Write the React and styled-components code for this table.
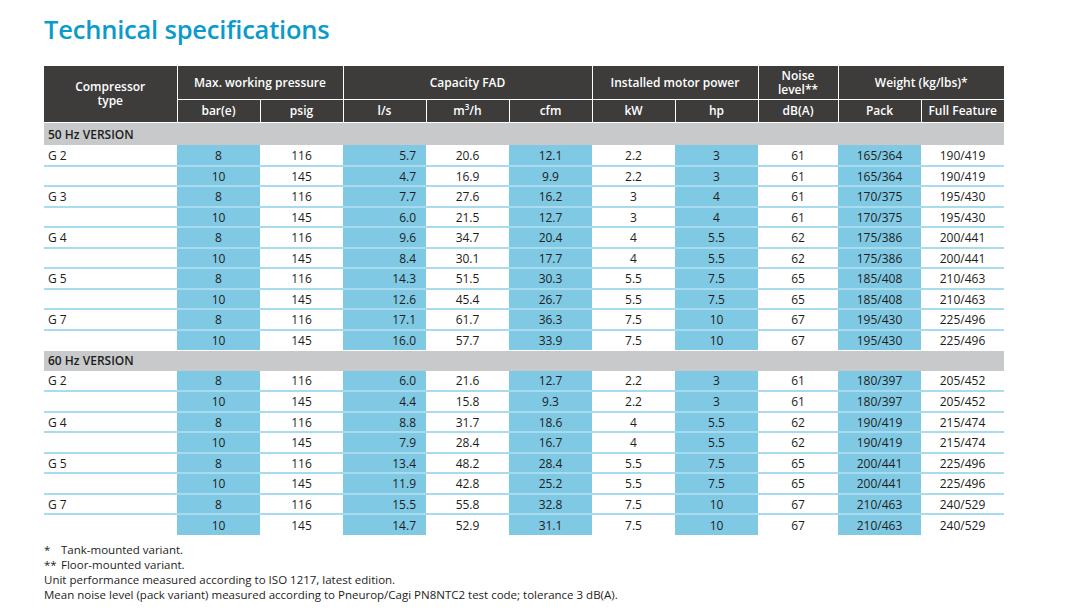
import React from "react";
import styled, { createGlobalStyle } from "styled-components";

const GlobalStyle = createGlobalStyle`
  html, body {
    margin: 0;
    padding: 0;
    background: #fff;
  }
  body {
    font-family: "Open Sans", "Liberation Sans", sans-serif;
    color: #1d1d1b;
  }
`;

const Page = styled.div`
  width: 1071px;
  height: 612px;
  padding: 12px 0 0 44px;
  box-sizing: border-box;
  overflow: hidden;
`;

const Title = styled.h1`
  margin: 0 0 20px 0;
  font-size: 25.5px;
  line-height: 34px;
  font-weight: 600;
  color: #0b9bcb;
  letter-spacing: -0.2px;
`;

const Table = styled.table`
  border-collapse: collapse;
  table-layout: fixed;
  width: 960px;
  font-size: 12px;
`;

const HeadCell = styled.th`
  background: #3d3c3b;
  color: #fff;
  font-weight: 600;
  font-size: 12px;
  line-height: 14px;
  border: 1.5px solid #fff;
  border-top: none;
  padding: 0 2px;
  height: ${(p) => (p.$top ? "33px" : "22px")};
  text-align: center;
  &:first-child {
    border-left: none;
  }
  &:last-child {
    border-right: none;
  }
`;

const SectionRow = styled.tr`
  background: #c8c9cb;
`;

const SectionCell = styled.td`
  height: ${(p) => p.$h || 20}px;
  padding: 0 4px;
  font-weight: 600;
  font-size: 12px;
  border-top: 1.5px solid #fff;
`;

const DataRow = styled.tr`
  height: 20.5px;
  border-top: ${(p) => (p.$first ? "none" : "2px solid #a9dbef")};
`;

const Cell = styled.td`
  padding: 1px ${(p) => (p.$right ? "10px" : "2px")} 0 ${(p) => (p.$left ? "4px" : "2px")};
  text-align: ${(p) => (p.$left ? "left" : p.$right ? "right" : "center")};
  background: ${(p) => (p.$blue ? "#80c9e4" : "#fff")};
  line-height: 17px;
  white-space: nowrap;
`;

const Notes = styled.div`
  margin-top: 7px;
  font-size: 11.5px;
  line-height: 15px;
  color: #1d1d1b;
`;

const NoteRow = styled.div`
  display: flex;
`;

const Mark = styled.span`
  width: 17px;
  flex: none;
`;

const blueCols = [1, 3, 5, 7, 9];

const data50 = [
  ["G 2", "8", "116", "5.7", "20.6", "12.1", "2.2", "3", "61", "165/364", "190/419"],
  ["", "10", "145", "4.7", "16.9", "9.9", "2.2", "3", "61", "165/364", "190/419"],
  ["G 3", "8", "116", "7.7", "27.6", "16.2", "3", "4", "61", "170/375", "195/430"],
  ["", "10", "145", "6.0", "21.5", "12.7", "3", "4", "61", "170/375", "195/430"],
  ["G 4", "8", "116", "9.6", "34.7", "20.4", "4", "5.5", "62", "175/386", "200/441"],
  ["", "10", "145", "8.4", "30.1", "17.7", "4", "5.5", "62", "175/386", "200/441"],
  ["G 5", "8", "116", "14.3", "51.5", "30.3", "5.5", "7.5", "65", "185/408", "210/463"],
  ["", "10", "145", "12.6", "45.4", "26.7", "5.5", "7.5", "65", "185/408", "210/463"],
  ["G 7", "8", "116", "17.1", "61.7", "36.3", "7.5", "10", "67", "195/430", "225/496"],
  ["", "10", "145", "16.0", "57.7", "33.9", "7.5", "10", "67", "195/430", "225/496"],
];

const data60 = [
  ["G 2", "8", "116", "6.0", "21.6", "12.7", "2.2", "3", "61", "180/397", "205/452"],
  ["", "10", "145", "4.4", "15.8", "9.3", "2.2", "3", "61", "180/397", "205/452"],
  ["G 4", "8", "116", "8.8", "31.7", "18.6", "4", "5.5", "62", "190/419", "215/474"],
  ["", "10", "145", "7.9", "28.4", "16.7", "4", "5.5", "62", "190/419", "215/474"],
  ["G 5", "8", "116", "13.4", "48.2", "28.4", "5.5", "7.5", "65", "200/441", "225/496"],
  ["", "10", "145", "11.9", "42.8", "25.2", "5.5", "7.5", "65", "200/441", "225/496"],
  ["G 7", "8", "116", "15.5", "55.8", "32.8", "7.5", "10", "67", "210/463", "240/529"],
  ["", "10", "145", "14.7", "52.9", "31.1", "7.5", "10", "67", "210/463", "240/529"],
];

function Rows({ rows }) {
  return rows.map((row, i) => (
    <DataRow key={i} $first={i === 0}>
      {row.map((v, j) => (
        <Cell key={j} $blue={blueCols.includes(j)} $left={j === 0} $right={j === 3}>
          {v}
        </Cell>
      ))}
    </DataRow>
  ));
}

export default function App() {
  return (
    <Page>
      <GlobalStyle />
      <Title>Technical specifications</Title>
      <Table>
        <colgroup>
          <col style={{ width: 133 }} />
          <col style={{ width: 83 }} />
          <col style={{ width: 83 }} />
          <col style={{ width: 83 }} />
          <col style={{ width: 83 }} />
          <col style={{ width: 83 }} />
          <col style={{ width: 83 }} />
          <col style={{ width: 83 }} />
          <col style={{ width: 80 }} />
          <col style={{ width: 83 }} />
          <col style={{ width: 83 }} />
        </colgroup>
        <thead>
          <tr>
            <HeadCell $top rowSpan={2}>
              Compressor
              <br />
              type
            </HeadCell>
            <HeadCell $top colSpan={2}>Max. working pressure</HeadCell>
            <HeadCell $top colSpan={3}>Capacity FAD</HeadCell>
            <HeadCell $top colSpan={2}>Installed motor power</HeadCell>
            <HeadCell $top>
              Noise
              <br />
              level**
            </HeadCell>
            <HeadCell $top colSpan={2}>Weight (kg/lbs)*</HeadCell>
          </tr>
          <tr>
            <HeadCell>bar(e)</HeadCell>
            <HeadCell>psig</HeadCell>
            <HeadCell>l/s</HeadCell>
            <HeadCell>
              m<sup style={{ fontSize: 8, lineHeight: 0 }}>3</sup>/h
            </HeadCell>
            <HeadCell>cfm</HeadCell>
            <HeadCell>kW</HeadCell>
            <HeadCell>hp</HeadCell>
            <HeadCell>dB(A)</HeadCell>
            <HeadCell>Pack</HeadCell>
            <HeadCell>Full Feature</HeadCell>
          </tr>
        </thead>
        <tbody>
          <SectionRow>
            <SectionCell colSpan={11} $h={22}>50 Hz VERSION</SectionCell>
          </SectionRow>
          <Rows rows={data50} />
          <SectionRow>
            <SectionCell colSpan={11} $h={20}>60 Hz VERSION</SectionCell>
          </SectionRow>
          <Rows rows={data60} />
        </tbody>
      </Table>
      <Notes>
        <NoteRow>
          <Mark>*</Mark>Tank-mounted variant.
        </NoteRow>
        <NoteRow>
          <Mark>**</Mark>Floor-mounted variant.
        </NoteRow>
        <div>Unit performance measured according to ISO 1217, latest edition.</div>
        <div>
          Mean noise level (pack variant) measured according to Pneurop/Cagi PN8NTC2 test code; tolerance 3 dB(A).
        </div>
      </Notes>
    </Page>
  );
}
